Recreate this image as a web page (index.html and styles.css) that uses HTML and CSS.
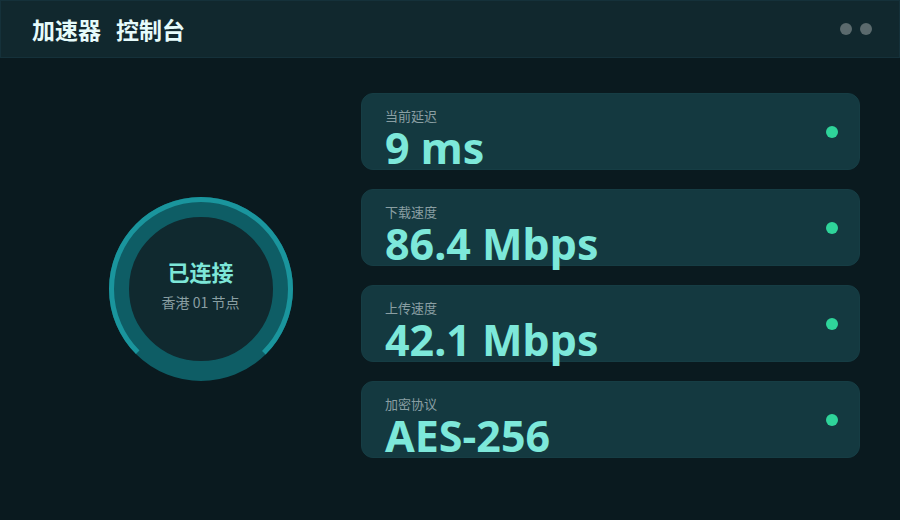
FILE: index.html
```html
<!DOCTYPE html>
<html lang="zh-CN">
<head>
<meta charset="utf-8">
<title>加速器 控制台</title>
<link rel="stylesheet" href="styles.css">
</head>
<body>
<div class="app">
  <header class="topbar">
    <h1 class="title"><span>加速器</span><span>控制台</span></h1>
    <div class="win-dots"><span class="wdot"></span><span class="wdot"></span></div>
  </header>
  <main class="main">
    <section class="status">
      <div class="ring">
        <svg class="ring-svg" width="184" height="184" viewBox="0 0 184 184">
          <circle cx="92" cy="92" r="82" fill="#10292f" stroke="#0e5d65" stroke-width="20"/>
          <circle cx="92" cy="92" r="89.5" fill="none" stroke="#1a959d" stroke-width="5" stroke-dasharray="421.8 600" transform="rotate(135 92 92)"/>
        </svg>
        <div class="ring-text">
          <div class="ring-title">已连接</div>
          <div class="ring-sub">香港 01 节点</div>
        </div>
      </div>
    </section>
    <section class="cards">
      <div class="card">
        <div class="card-body"><div class="label">当前延迟</div><div class="value">9 ms</div></div>
        <span class="dot"></span>
      </div>
      <div class="card">
        <div class="card-body"><div class="label">下载速度</div><div class="value">86.4 Mbps</div></div>
        <span class="dot"></span>
      </div>
      <div class="card">
        <div class="card-body"><div class="label">上传速度</div><div class="value">42.1 Mbps</div></div>
        <span class="dot"></span>
      </div>
      <div class="card">
        <div class="card-body"><div class="label">加密协议</div><div class="value">AES-256</div></div>
        <span class="dot"></span>
      </div>
    </section>
  </main>
</div>
</body>
</html>
```

FILE: styles.css
```css
* { box-sizing: border-box; margin: 0; padding: 0; }
html, body { width: 900px; height: 520px; overflow: hidden; }
body {
  background: #0a1a1f;
  font-family: "Noto Sans", "Noto Sans CJK SC", sans-serif;
}
.app { display: flex; flex-direction: column; height: 520px; }
.topbar {
  height: 58px;
  background: #11282e;
  border: 1px solid #15313a;
  display: flex;
  align-items: center;
  justify-content: space-between;
  padding: 0 27px 0 31px;
}
.title {
  display: flex;
  gap: 15px;
  font-size: 23px;
  font-weight: 700;
  color: #e6fbfb;
  font-family: "Noto Sans CJK SC", sans-serif;
  line-height: 1;
}
.win-dots { display: flex; gap: 8px; }
.wdot { width: 12px; height: 12px; border-radius: 50%; background: #5b6a6d; }
.main {
  flex: 1;
  display: grid;
  grid-template-columns: 320px 1fr;
  padding: 0 40px 0 41px;
}
.status { display: flex; align-items: center; justify-content: center; }
.ring { position: relative; width: 184px; height: 184px; margin-left: -1px; }
.ring-svg { display: block; }
.ring-text {
  position: absolute;
  inset: 0;
  display: flex;
  flex-direction: column;
  align-items: center;
  justify-content: center;
  font-family: "Noto Sans CJK SC", sans-serif;
  padding-bottom: 10px;
}
.ring-title { font-size: 22px; font-weight: 700; color: #7de6d8; line-height: 1; }
.ring-sub { font-size: 14px; color: #8a9fa3; margin-top: 13px; line-height: 1; }
.cards {
  display: flex;
  flex-direction: column;
  gap: 19px;
  padding-top: 35px;
}
.card {
  height: 77px;
  background: #143940;
  border: 1px solid #163d44;
  border-radius: 12px;
  display: flex;
  align-items: center;
  justify-content: space-between;
  padding: 0 21px 0 23px;
}
.card-body { align-self: flex-start; padding-top: 13px; }
.label {
  font-family: "Noto Sans CJK SC", sans-serif;
  font-size: 13px;
  color: #8a9fa3;
  line-height: 17px;
}
.value {
  font-size: 43px;
  font-weight: 700;
  color: #7de8da;
  line-height: 40px;
  margin-top: 4px;
  white-space: nowrap;
}
.dot { width: 12px; height: 12px; border-radius: 50%; background: #2fd49a; }
```
